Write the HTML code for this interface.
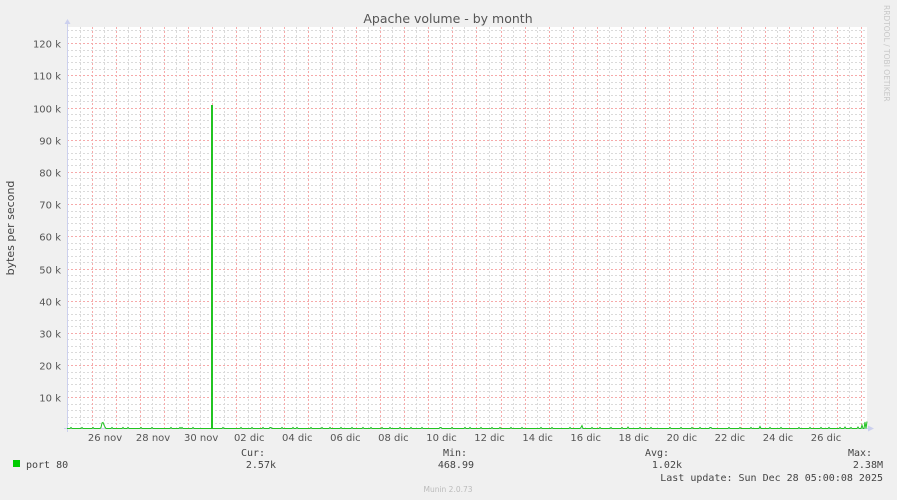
<!DOCTYPE html>
<html><head><meta charset="utf-8"><style>
html,body{margin:0;padding:0;background:#f0f0f0;width:897px;height:500px;overflow:hidden}
svg{display:block}
.ax{font-family:"DejaVu Sans","Liberation Sans",sans-serif;font-size:10px;fill:#555}
.mono{font-family:"DejaVu Sans Mono","Liberation Mono",monospace;font-size:10px;fill:#444}
</style></head><body>
<svg width="897" height="500" xmlns="http://www.w3.org/2000/svg">
<rect x="67" y="27" width="800" height="402" fill="#fff"/>
<g id="g"></g>
<text x="448" y="23" text-anchor="middle" font-family="DejaVu Sans,Liberation Sans,sans-serif" font-size="12.5" fill="#555">Apache volume - by month</text>
<text transform="translate(14,228) rotate(-90)" text-anchor="middle" class="ax" style="font-size:11px;fill:#444">bytes per second</text>
<text transform="translate(884,5) rotate(90)" font-family="DejaVu Sans,sans-serif" font-size="7.5" fill="#c8c8c8">RRDTOOL / TOBI OETIKER</text>
<text x="448" y="492" text-anchor="middle" font-family="DejaVu Sans,sans-serif" font-size="7.5" fill="#bbb">Munin 2.0.73</text>
<rect x="13" y="460" width="7" height="7" fill="#00cc00"/>
<text x="26" y="468" class="mono">port 80</text>
<text x="241" y="456" class="mono">Cur:</text>
<text x="276" y="468" class="mono" text-anchor="end">2.57k</text>
<text x="443" y="456" class="mono">Min:</text>
<text x="474" y="468" class="mono" text-anchor="end">468.99</text>
<text x="645" y="456" class="mono">Avg:</text>
<text x="682" y="468" class="mono" text-anchor="end">1.02k</text>
<text x="848" y="456" class="mono">Max:</text>
<text x="883" y="468" class="mono" text-anchor="end">2.38M</text>
<text x="883" y="481" class="mono" text-anchor="end">Last update: Sun Dec 28 05:00:08 2025</text>
</svg>
<script>
var g=document.getElementById('g'),s='';
function L(x1,y1,x2,y2,c,d,w){s+='<line x1="'+x1+'" y1="'+y1+'" x2="'+x2+'" y2="'+y2+'" stroke="'+c+'" stroke-width="'+(w||1)+'"'+(d?' stroke-dasharray="'+d+'"':'')+'/>';}
for(var v=2;v<=124;v+=2){var y=Math.round(429.5-v*3.22)+0.5;if(v%10)L(67,y,867,y,'#dadada','2,2');}
for(var i=-1;i<34;i++){var x=Math.round(80+i*24.03)+0.5;if(x>67&&x<867)L(x,27,x,429,'#dadada','2,2');}
for(var i=0;i<33;i++){var x=Math.round(92+i*24.03)+0.5;if(x<867)L(x,27,x,429,'#f6aaaa','2,2');}
for(var v=10;v<=120;v+=10){var y=Math.round(429.5-v*3.22)+0.5;L(67,y,867,y,'#f6aaaa','2,2');
 s+='<text x="61" y="'+(y+4)+'" text-anchor="end" class="ax">'+v+' k</text>';}
var lb=['26 nov','28 nov','30 nov','02 dic','04 dic','06 dic','08 dic','10 dic','12 dic','14 dic','16 dic','18 dic','20 dic','22 dic','24 dic','26 dic'];
for(var i=0;i<lb.length;i++)s+='<text x="'+(105+i*48.07)+'" y="441" text-anchor="middle" class="ax">'+lb[i]+'</text>';
L(67.5,24,67.5,432,'#ccd0ee');L(64,428.5,870,428.5,'#ccd0ee');
s+='<polygon points="64.5,24 70.5,24 67.5,19" fill="#ccd0ee"/><polygon points="868,425.5 868,431.5 874,428.5" fill="#ccd0ee"/>';
var p='67,428.5',bumps={102:423,103:422.5,104:425,105:427,128:427.5,180:427.5,270:427.5,297:427.5,390:427.5,440:427.5,465:427.5,582:425.5,628:427,760:426.5,845:427,858:427,862:425,865:422,867:421.5};
for(var x=68;x<=867;x++){if(x>=211&&x<=214)continue;var y=bumps[x]||((Math.sin(x*1.7)+Math.sin(x*0.63))>1.5?427.5:428.5);p+=' '+x+','+y;}
s+='<polyline points="'+p.replace(' 215,',' 210,428.5 215,')+'" fill="none" stroke="#22c322" stroke-width="1"/>';
s+='<rect x="211" y="105" width="2" height="324" fill="#22c322"/>';
g.innerHTML=s;
</script>
</body></html>
